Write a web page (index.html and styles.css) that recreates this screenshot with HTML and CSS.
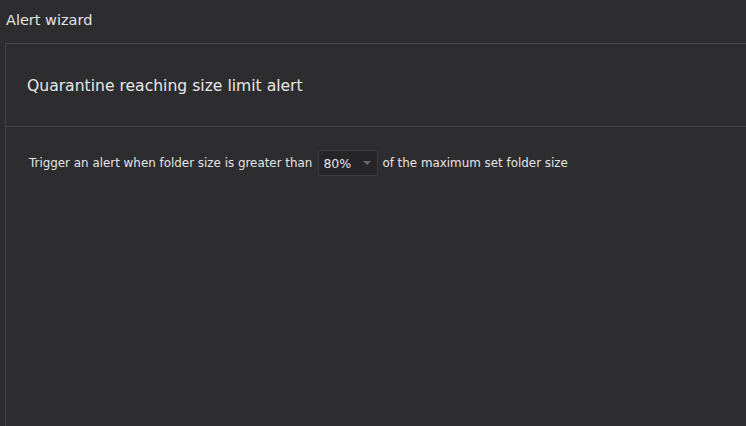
FILE: index.html
```html
<!DOCTYPE html>
<html>
<head>
<meta charset="utf-8">
<link rel="stylesheet" href="styles.css">
</head>
<body>
<div class="title">Alert wizard</div>
<div class="panel">
  <div class="panel-header">Quarantine reaching size limit alert</div>
  <div class="panel-body">
    <span class="label">Trigger an alert when folder size is greater than</span>
    <div class="select"><span class="value">80%</span><span class="caret"></span></div>
    <span class="label">of the maximum set folder size</span>
  </div>
</div>
</body>
</html>
```
FILE: styles.css
```css
html, body {
  margin: 0;
  height: 100%;
  background: #2d2d2f;
  overflow: hidden;
}
body {
  font-family: "DejaVu Sans", sans-serif;
  color: #e4e4e4;
  display: flex;
  flex-direction: column;
}
.title {
  height: 43px;
  padding-left: 6px;
  line-height: 41px;
  font-size: 14.5px;
}
.panel {
  flex: 1;
  margin-left: 5px;
  border-left: 1px solid #424244;
  border-top: 1px solid #424244;
}
.panel-header {
  height: 82px;
  border-bottom: 1px solid #424244;
  padding-left: 21px;
  line-height: 84px;
  font-size: 15.6px;
  color: #e8e8e8;
}
.panel-body {
  display: flex;
  align-items: center;
  padding: 23px 0 0 23px;
  font-size: 11.9px;
}
.select {
  display: flex;
  align-items: center;
  width: 58px;
  height: 24px;
  margin: 0 4px 0 6px;
  background: #262628;
  border: 1px solid #3c3c3e;
  box-sizing: content-box;
}
.value {
  padding-left: 4px;
  font-size: 12.5px;
  flex: 1;
}
.caret {
  width: 0;
  height: 0;
  border-left: 4px solid transparent;
  border-right: 4px solid transparent;
  border-top: 4px solid #6a6a6c;
  margin-right: 6px;
}
```
